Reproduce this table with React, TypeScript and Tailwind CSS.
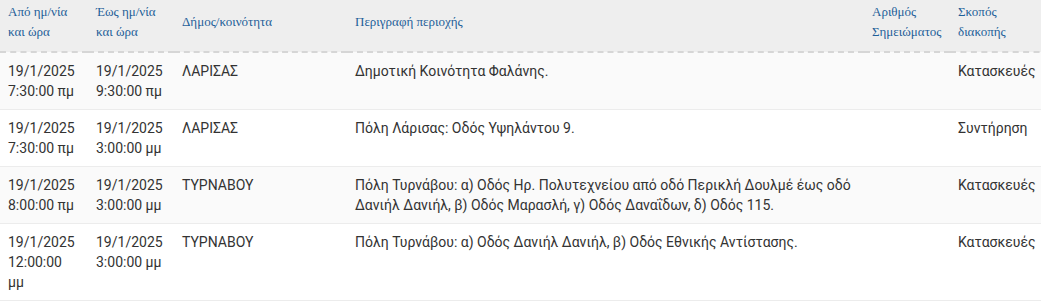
import React from 'react';

const rows = [
  {
    from: ['19/1/2025', '7:30:00 πμ'],
    to: ['19/1/2025', '9:30:00 πμ'],
    municipality: 'ΛΑΡΙΣΑΣ',
    description: 'Δημοτική Κοινότητα Φαλάνης.',
    note: '',
    purpose: 'Κατασκευές',
  },
  {
    from: ['19/1/2025', '7:30:00 πμ'],
    to: ['19/1/2025', '3:00:00 μμ'],
    municipality: 'ΛΑΡΙΣΑΣ',
    description: 'Πόλη Λάρισας: Οδός Υψηλάντου 9.',
    note: '',
    purpose: 'Συντήρηση',
  },
  {
    from: ['19/1/2025', '8:00:00 πμ'],
    to: ['19/1/2025', '3:00:00 μμ'],
    municipality: 'ΤΥΡΝΑΒΟΥ',
    description:
      'Πόλη Τυρνάβου: α) Οδός Ηρ. Πολυτεχνείου από οδό Περικλή Δουλμέ έως οδό Δανιήλ Δανιήλ, β) Οδός Μαρασλή, γ) Οδός Δαναΐδων, δ) Οδός 115.',
    note: '',
    purpose: 'Κατασκευές',
  },
  {
    from: ['19/1/2025', '12:00:00 μμ'],
    to: ['19/1/2025', '3:00:00 μμ'],
    municipality: 'ΤΥΡΝΑΒΟΥ',
    description: 'Πόλη Τυρνάβου: α) Οδός Δανιήλ Δανιήλ, β) Οδός Εθνικής Αντίστασης.',
    note: '',
    purpose: 'Κατασκευές',
  },
];

const headers = [
  { label: 'Από ημ/νία και ώρα', width: 'w-[88px]' },
  { label: 'Έως ημ/νία και ώρα', width: 'w-[86px]' },
  { label: 'Δήμος/κοινότητα', width: 'w-[173px]' },
  { label: 'Περιγραφή περιοχής', width: 'w-[517px]' },
  { label: 'Αριθμός Σημειώματος', width: 'w-[86px]' },
  { label: 'Σκοπός διακοπής', width: 'w-[100px]' },
];

export default function App() {
  return (
    <div className="w-[1041px] h-[302px] overflow-hidden bg-white">
      <table className="table-fixed w-[1050px] border-collapse text-left">
        <thead>
          <tr className="bg-[#eeeeee]">
            {headers.map((h) => (
              <th
                key={h.label}
                className={`${h.width} text-left align-middle px-2 pt-[2px] pb-[9px] border-b-2 border-dashed border-[#d6d6d6] font-normal text-[13px] leading-[20px] text-[#1f5f99] font-['Liberation_Serif','DejaVu_Serif',serif]`}
              >
                {h.label}
              </th>
            ))}
          </tr>
        </thead>
        <tbody className="font-['Roboto','Noto_Sans',sans-serif] text-[14px] leading-[20px] text-[#333333]">
          {rows.map((r, i) => (
            <tr
              key={i}
              className={`${i % 2 === 0 ? 'bg-[#fafafa]' : 'bg-white'} border-b border-[#ececec]`}
            >
              <td className="align-top p-2">
                {r.from[0]}
                <br />
                {r.from[1]}
              </td>
              <td className="align-top p-2">
                {r.to[0]}
                <br />
                {r.to[1]}
              </td>
              <td className="align-top p-2">{r.municipality}</td>
              <td className="align-top p-2">{r.description}</td>
              <td className="align-top p-2">{r.note}</td>
              <td className="align-top p-2">{r.purpose}</td>
            </tr>
          ))}
        </tbody>
      </table>
    </div>
  );
}
